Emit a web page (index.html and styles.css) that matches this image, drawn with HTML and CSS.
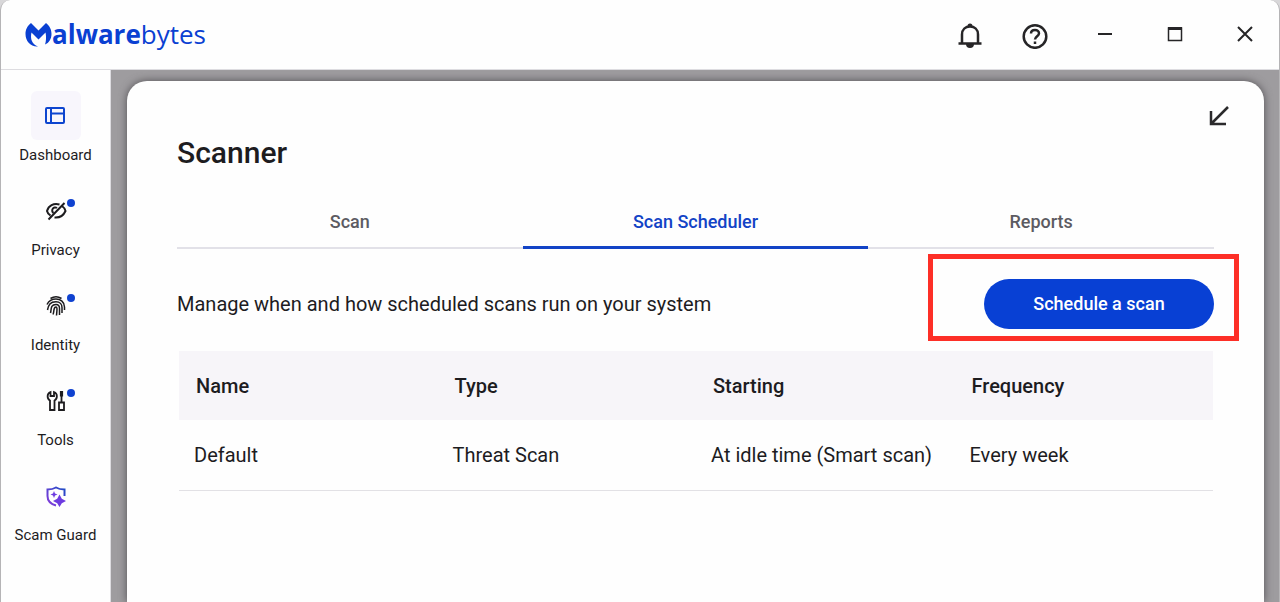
FILE: index.html
```html
<!DOCTYPE html>
<html lang="en">
<head>
    <meta charset="UTF-8">
    <meta name="viewport" content="width=device-width, initial-scale=1.0">
    <title>Malwarebytes - Scanner</title>
    <link rel="stylesheet" href="styles.css">
</head>
<body>
    <div class="window">
        <!-- Title bar -->
        <header class="titlebar">
            <a href="#" class="logo">
                <svg width="27" height="26" viewBox="0 0 27 26" fill="#0a40d2">
                    <path d="M6 1 L13.500 8.500 L21 1 C25 4 26.500 8 26.500 12 C26.500 17 24 21 20 22.500 C21 20 21.500 15 20.500 10.500 L13.500 17.500 L6.500 10.500 C5 17 7 22 13 24.500 C5.500 25 0.500 19 0.500 12 C0.500 8 2 4 6 1 Z"/>
                </svg>
                <span class="logo-text"><b>alware</b>bytes</span>
            </a>
            <div class="titlebar-actions">
                <button type="button" aria-label="Notifications">
                    <svg width="26" height="28" viewBox="0 0 26 28" fill="none" stroke="#262527" stroke-width="2.500">
                        <path d="M5 22V13.500C5 8.500 8.500 5.500 13 5.500S21 8.500 21 13.500V22M1.500 22.500H24.500"/>
                        <path d="M10.500 5A2.500 2.500 0 0 1 15.500 5ZM9 23H17A4 4 0 0 1 9 23Z" fill="#262527" stroke="none"/>
                    </svg>
                </button>
                <button type="button" aria-label="Help">
                    <svg width="26" height="28" viewBox="0 0 26 28" fill="none" stroke="#262527" stroke-width="2.500">
                        <circle cx="13" cy="15.500" r="11.300"/>
                        <path d="M9 12.500C9 10 10.700 9 13 9S17 10.500 17 12.500C17 15 13 15.500 13 18.500M13 20.500V23"/>
                    </svg>
                </button>
                <button type="button" aria-label="Minimize">
                    <svg width="16" height="18" viewBox="0 0 16 18"><path d="M1 7H15V9H1Z" fill="#262527"/></svg>
                </button>
                <button type="button" aria-label="Maximize">
                    <svg width="16" height="18" viewBox="0 0 16 18" fill="none" stroke="#262527" stroke-width="1.500"><path d="M1.500 2H14.500V14.500H1.500Z"/><path d="M1 2.500H15" stroke-width="3"/></svg>
                </button>
                <button type="button" aria-label="Close">
                    <svg width="16" height="18" viewBox="0 0 16 18" stroke="#262527" stroke-width="2"><path d="M1 1L15 15M15 1L1 15"/></svg>
                </button>
            </div>
        </header>

        <div class="layout">
            <!-- Sidebar -->
            <nav class="sidebar">
                <a href="#" class="nav-item active">
                    <span class="nav-icon">
                        <svg width="24" height="24" viewBox="0 0 24 24" fill="none" stroke="#0d45cf" stroke-width="2">
                            <rect x="2" y="4" width="18" height="15" rx="1"/>
                            <path d="M7 4V19M7 9.500H20"/>
                        </svg>
                    </span>
                    <span>Dashboard</span>
                </a>
                <a href="#" class="nav-item">
                    <span class="nav-icon">
                        <svg width="24" height="24" viewBox="0 0 24 24" fill="none" stroke="#1d1c1f" stroke-width="2">
                            <path d="M15.500 5.500C9.500 4 4.500 6.500 3 12C3.500 14 4.500 15.500 6.500 16.500M18.500 7.500C20 8.500 21 10 21.500 12C19 17.500 15.500 19 10.500 18.500M4.500 20.500L20.500 4"/>
                            <path d="M13 9A3 3 0 0 0 9.500 14"/>
                        </svg>
                        <i class="dot"></i>
                    </span>
                    <span>Privacy</span>
                </a>
                <a href="#" class="nav-item">
                    <span class="nav-icon">
                        <svg width="24" height="24" viewBox="0 0 24 24" fill="none" stroke="#1d1c1f" stroke-width="1.500">
                            <path d="M6.500 4.500C10 2.300 14 2.300 17.500 4.500"/>
                            <path d="M3 10.500C5 6.500 8 5 12 5C16.500 5 20.500 8 20.500 13V16"/>
                            <path d="M3.500 16C4.500 11 6 7.800 12 7.800C16 7.800 18 10.500 18 13.500V19"/>
                            <path d="M6.500 19C7.500 16 6 10.500 12 10.500C14.500 10.500 15.500 12 15.500 14.500V21"/>
                            <path d="M9 20.500C10.500 17.500 9 13 12 13C13.500 13 13 16 12.500 21.500"/>
                        </svg>
                        <i class="dot"></i>
                    </span>
                    <span>Identity</span>
                </a>
                <a href="#" class="nav-item">
                    <span class="nav-icon">
                        <svg width="24" height="24" viewBox="0 0 24 24" fill="none" stroke="#1d1c1f" stroke-width="1.800">
                            <path d="M6.500 3C2.500 4.500 3 10 6 11.500V21H10.500V11.500C13.500 10 14 4.500 10 3V7H6.500Z"/>
                            <path d="M17.500 5V13M16.800 3V6.500H18.200V3Z"/>
                            <path d="M15 13.500H20V21H15Z"/>
                        </svg>
                        <i class="dot"></i>
                    </span>
                    <span>Tools</span>
                </a>
                <a href="#" class="nav-item">
                    <span class="nav-icon">
                        <svg width="24" height="24" viewBox="0 0 24 24" fill="none">
                            <defs>
                                <linearGradient id="guard" x1="0" y1="1" x2="1" y2="0">
                                    <stop offset="0" stop-color="#8a3bdc"/>
                                    <stop offset="1" stop-color="#1c4bc4"/>
                                </linearGradient>
                            </defs>
                            <path d="M20.500 12V5.500C17 5.500 14.500 5 12 3.500C9.500 5 7 5.500 3.500 5.500V12C3.500 16.500 6.500 20 12 21.500" stroke="url(#guard)" stroke-width="2"/>
                            <path d="M10 7L11 9.500L13.500 10.500L11 11.500L10 14L9 11.500L6.500 10.500L9 9.500ZM15.500 10.500L17.800 14.700L22 17L17.800 19.300L15.500 23L13.200 19.300L9 17L13.200 14.700Z" fill="#6d3be0"/>
                        </svg>
                    </span>
                    <span>Scam Guard</span>
                </a>
            </nav>

            <!-- Scanner panel -->
            <main class="content">
                <section class="card">
                    <button type="button" class="collapse" aria-label="Collapse">
                        <svg width="20" height="20" viewBox="0 0 20 20" fill="none" stroke="#2b2a2c" stroke-width="2.500"><path d="M19 1L2.500 17.500M2 5V18H17"/></svg>
                    </button>
                    <h1>Scanner</h1>
                    <div class="tabs" role="tablist">
                        <button type="button" class="tab" role="tab">Scan</button>
                        <button type="button" class="tab selected" role="tab" aria-selected="true">Scan Scheduler</button>
                        <button type="button" class="tab" role="tab">Reports</button>
                    </div>
                    <div class="toolbar">
                        <p>Manage when and how scheduled scans run on your system</p>
                        <div class="schedule">
                            <button type="button" class="btn-schedule">Schedule a scan</button>
                        </div>
                    </div>
                    <div class="table-wrap">
                        <table class="scans">
                            <thead>
                                <tr><th>Name</th><th>Type</th><th>Starting</th><th>Frequency</th></tr>
                            </thead>
                            <tbody>
                                <tr><td>Default</td><td>Threat Scan</td><td>At idle time (Smart scan)</td><td>Every week</td></tr>
                            </tbody>
                        </table>
                    </div>
                </section>
            </main>
        </div>
    </div>
</body>
</html>
```

FILE: styles.css
```css
* {
    box-sizing: border-box;
}
body {
    margin: 0;
    font-family: Roboto, "Liberation Sans", sans-serif;
    color: #1d1c1f;
    background-color: #d8d7d9;
}
button {
    font-family: inherit;
    border: none;
    background: none;
    padding: 0;
    cursor: pointer;
}
svg {
    display: block;
}
.window {
    display: flex;
    flex-direction: column;
    min-height: 100vh;
    border: 1px solid #b5b4b6;
    border-top: none;
    border-bottom: none;
    border-radius: 10px 10px 0 0;
    background-color: #fefefe;
    overflow: hidden;
}

/* Title bar */
.titlebar {
    display: flex;
    justify-content: space-between;
    align-items: center;
    height: 70px;
    padding: 0 24px;
    border-bottom: 1px solid #dddce0;
}
.logo {
    display: flex;
    align-items: center;
    color: #0a40d2;
    text-decoration: none;
}
.logo-text {
    font-family: "Open Sans", "Noto Sans", sans-serif;
    font-size: 26px;
    line-height: 32px;
    padding-bottom: 2px;
}
.logo-text b {
    font-weight: 700;
}
.titlebar-actions {
    display: flex;
    align-items: center;
}
.titlebar-actions button {
    display: flex;
    justify-content: center;
    width: 70px;
}
.titlebar-actions button:first-child {
    width: 60px;
}
.titlebar-actions button:last-child {
    margin-right: -25px;
}

/* Sidebar */
.layout {
    display: flex;
    flex: 1;
}
.sidebar {
    display: flex;
    flex-direction: column;
    gap: 20px;
    width: 110px;
    padding-top: 21px;
    border-right: 1px solid #dddce0;
}
.nav-item {
    display: flex;
    flex-direction: column;
    align-items: center;
    height: 75px;
    font-size: 15px;
    line-height: 24px;
    color: #1d1c1f;
    text-decoration: none;
}
.nav-icon {
    position: relative;
    display: flex;
    flex-shrink: 0;
    justify-content: center;
    align-items: center;
    width: 50px;
    height: 49px;
    margin-bottom: 3px;
    border-radius: 6px;
}
.active .nav-icon {
    background-color: #f8f6fc;
}
.dot {
    position: absolute;
    top: 13px;
    right: 6px;
    width: 8px;
    height: 8px;
    border-radius: 50%;
    background-color: #0f42d0;
}

/* Content */
.content {
    display: flex;
    flex: 1;
    padding: 11px 15px 0 16px;
    background-color: #9e9c9f;
}
.card {
    position: relative;
    flex: 1;
    padding: 50px 50px 0;
    border-radius: 20px 20px 0 0;
    background-color: #fefefe;
    box-shadow: 0 0 8px #504e52;
}
.collapse {
    position: absolute;
    top: 25px;
    right: 35px;
}
h1 {
    margin: 0;
    font-size: 30px;
    line-height: 44px;
    font-weight: 500;
}
.tabs {
    display: flex;
    margin-top: 22px;
    border-bottom: 2px solid #e2e1e8;
}
.tab {
    flex: 1;
    height: 52px;
    margin-bottom: -2px;
    border-bottom: 3px solid transparent;
    font-size: 18px;
    font-weight: 500;
    color: #5c5b62;
}
.tab.selected {
    color: #1243c6;
    border-bottom-color: #1243c6;
}
.toolbar {
    display: flex;
    justify-content: space-between;
    align-items: center;
    margin: 5px -25px 10px 0;
}
.toolbar p {
    margin: 0;
    padding-top: 12px;
    font-size: 20px;
    line-height: 28px;
}
.schedule {
    display: flex;
    justify-content: flex-end;
    width: 311px;
    padding: 20px 20px 7px;
    border: 5px solid #fd2f27;
}
.btn-schedule {
    width: 230px;
    height: 50px;
    border-radius: 25px;
    font-size: 18px;
    font-weight: 500;
    line-height: 20px;
    color: #ffffff;
    background-color: #0840d4;
}
.table-wrap {
    padding: 0 1px 0 2px;
}
.scans {
    width: 100%;
    border-collapse: collapse;
    table-layout: fixed;
    font-size: 20px;
    line-height: 28px;
    text-align: left;
}
.scans th {
    height: 69px;
    padding: 0 17px;
    font-weight: 500;
    background-color: #f7f5f9;
}
.scans td {
    height: 70px;
    padding: 0 15px;
    border-bottom: 1px solid #e2e1e5;
    white-space: nowrap;
}
```
